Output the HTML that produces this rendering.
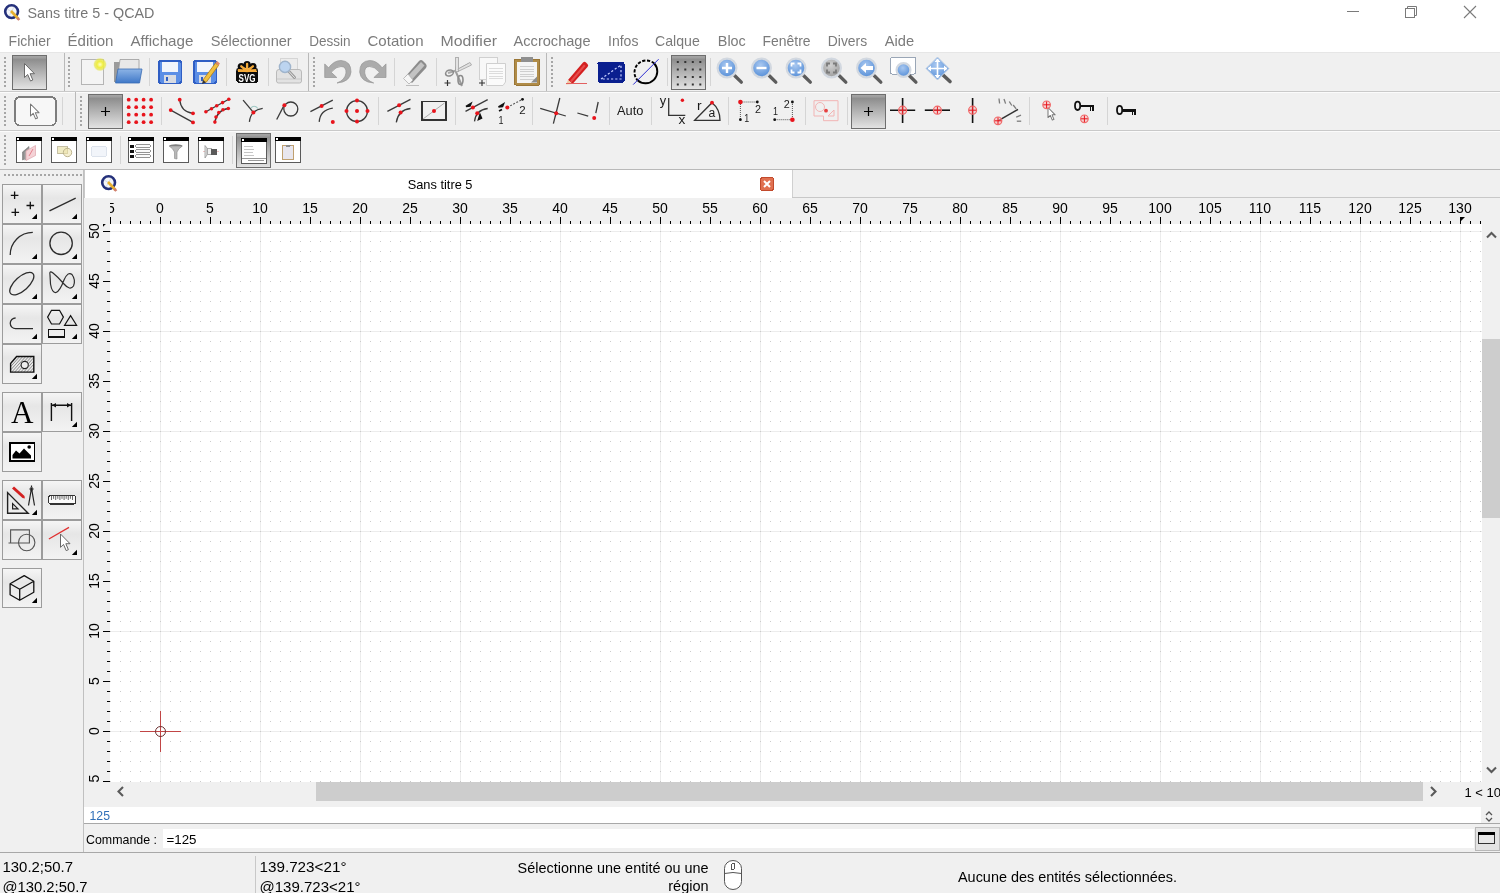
<!DOCTYPE html>
<html><head><meta charset="utf-8"><title>QCAD</title>
<style>html,body{margin:0;padding:0;overflow:hidden;background:#f0f0f0}
svg{display:block;will-change:transform} rect{shape-rendering:crispEdges} text{font-family:"Liberation Sans", sans-serif}</style></head>
<body><svg width="1500" height="893" viewBox="0 0 1500 893"><rect x="0" y="0" width="1500" height="893" fill="#f0f0f0"/><rect x="0" y="0" width="1500" height="52" fill="#ffffff"/><text x="27.5" y="18" font-size="15" fill="#767676" textLength="127" lengthAdjust="spacingAndGlyphs">Sans titre 5 - QCAD</text><rect x="1347" y="11" width="12" height="1" fill="#7a7a7a"/><rect x="1405.5" y="8.5" width="9" height="9" fill="none" stroke="#7a7a7a"/><path d="M1407.5 8.5 V6.5 H1416.5 V15.5 H1414.5" fill="none" stroke="#7a7a7a"/><path d="M1464 6 L1476 18 M1476 6 L1464 18" stroke="#7a7a7a" stroke-width="1.1"/><text x="8.6" y="46" font-size="15" fill="#7b7b7b" textLength="42" lengthAdjust="spacingAndGlyphs">Fichier</text><text x="67.5" y="46" font-size="15" fill="#7b7b7b" textLength="46" lengthAdjust="spacingAndGlyphs">Édition</text><text x="130.4" y="46" font-size="15" fill="#7b7b7b" textLength="63" lengthAdjust="spacingAndGlyphs">Affichage</text><text x="210.7" y="46" font-size="15" fill="#7b7b7b" textLength="81" lengthAdjust="spacingAndGlyphs">Sélectionner</text><text x="309.2" y="46" font-size="15" fill="#7b7b7b" textLength="41.4" lengthAdjust="spacingAndGlyphs">Dessin</text><text x="367.5" y="46" font-size="15" fill="#7b7b7b" textLength="56" lengthAdjust="spacingAndGlyphs">Cotation</text><text x="440.6" y="46" font-size="15" fill="#7b7b7b" textLength="56.4" lengthAdjust="spacingAndGlyphs">Modifier</text><text x="513.6" y="46" font-size="15" fill="#7b7b7b" textLength="77" lengthAdjust="spacingAndGlyphs">Accrochage</text><text x="608" y="46" font-size="15" fill="#7b7b7b" textLength="30.4" lengthAdjust="spacingAndGlyphs">Infos</text><text x="655" y="46" font-size="15" fill="#7b7b7b" textLength="44.8" lengthAdjust="spacingAndGlyphs">Calque</text><text x="717.8" y="46" font-size="15" fill="#7b7b7b" textLength="28" lengthAdjust="spacingAndGlyphs">Bloc</text><text x="762.6" y="46" font-size="15" fill="#7b7b7b" textLength="48" lengthAdjust="spacingAndGlyphs">Fenêtre</text><text x="827.8" y="46" font-size="15" fill="#7b7b7b" textLength="39.4" lengthAdjust="spacingAndGlyphs">Divers</text><text x="884.8" y="46" font-size="15" fill="#7b7b7b" textLength="29.4" lengthAdjust="spacingAndGlyphs">Aide</text><rect x="0" y="52" width="1500" height="1" fill="#e6e6e6"/><rect x="0" y="91" width="1500" height="1" fill="#c9c9c9"/><rect x="0" y="92" width="1500" height="1" fill="#fbfbfb"/><rect x="0" y="130" width="1500" height="1" fill="#c9c9c9"/><rect x="0" y="131" width="1500" height="1" fill="#fbfbfb"/><rect x="0" y="169" width="1500" height="1" fill="#b9b9b9"/><rect x="4" y="57" width="2" height="2" fill="#a6a6a6"/><rect x="4" y="61" width="2" height="2" fill="#a6a6a6"/><rect x="4" y="65" width="2" height="2" fill="#a6a6a6"/><rect x="4" y="69" width="2" height="2" fill="#a6a6a6"/><rect x="4" y="73" width="2" height="2" fill="#a6a6a6"/><rect x="4" y="77" width="2" height="2" fill="#a6a6a6"/><rect x="4" y="81" width="2" height="2" fill="#a6a6a6"/><rect x="4" y="85" width="2" height="2" fill="#a6a6a6"/><rect x="68" y="57" width="2" height="2" fill="#a6a6a6"/><rect x="68" y="61" width="2" height="2" fill="#a6a6a6"/><rect x="68" y="65" width="2" height="2" fill="#a6a6a6"/><rect x="68" y="69" width="2" height="2" fill="#a6a6a6"/><rect x="68" y="73" width="2" height="2" fill="#a6a6a6"/><rect x="68" y="77" width="2" height="2" fill="#a6a6a6"/><rect x="68" y="81" width="2" height="2" fill="#a6a6a6"/><rect x="68" y="85" width="2" height="2" fill="#a6a6a6"/><rect x="313" y="57" width="2" height="2" fill="#a6a6a6"/><rect x="313" y="61" width="2" height="2" fill="#a6a6a6"/><rect x="313" y="65" width="2" height="2" fill="#a6a6a6"/><rect x="313" y="69" width="2" height="2" fill="#a6a6a6"/><rect x="313" y="73" width="2" height="2" fill="#a6a6a6"/><rect x="313" y="77" width="2" height="2" fill="#a6a6a6"/><rect x="313" y="81" width="2" height="2" fill="#a6a6a6"/><rect x="313" y="85" width="2" height="2" fill="#a6a6a6"/><rect x="551" y="57" width="2" height="2" fill="#a6a6a6"/><rect x="551" y="61" width="2" height="2" fill="#a6a6a6"/><rect x="551" y="65" width="2" height="2" fill="#a6a6a6"/><rect x="551" y="69" width="2" height="2" fill="#a6a6a6"/><rect x="551" y="73" width="2" height="2" fill="#a6a6a6"/><rect x="551" y="77" width="2" height="2" fill="#a6a6a6"/><rect x="551" y="81" width="2" height="2" fill="#a6a6a6"/><rect x="551" y="85" width="2" height="2" fill="#a6a6a6"/><rect x="4" y="96" width="2" height="2" fill="#a6a6a6"/><rect x="4" y="100" width="2" height="2" fill="#a6a6a6"/><rect x="4" y="104" width="2" height="2" fill="#a6a6a6"/><rect x="4" y="108" width="2" height="2" fill="#a6a6a6"/><rect x="4" y="112" width="2" height="2" fill="#a6a6a6"/><rect x="4" y="116" width="2" height="2" fill="#a6a6a6"/><rect x="4" y="120" width="2" height="2" fill="#a6a6a6"/><rect x="4" y="124" width="2" height="2" fill="#a6a6a6"/><rect x="80" y="96" width="2" height="2" fill="#a6a6a6"/><rect x="80" y="100" width="2" height="2" fill="#a6a6a6"/><rect x="80" y="104" width="2" height="2" fill="#a6a6a6"/><rect x="80" y="108" width="2" height="2" fill="#a6a6a6"/><rect x="80" y="112" width="2" height="2" fill="#a6a6a6"/><rect x="80" y="116" width="2" height="2" fill="#a6a6a6"/><rect x="80" y="120" width="2" height="2" fill="#a6a6a6"/><rect x="80" y="124" width="2" height="2" fill="#a6a6a6"/><rect x="4" y="135" width="2" height="2" fill="#a6a6a6"/><rect x="4" y="139" width="2" height="2" fill="#a6a6a6"/><rect x="4" y="143" width="2" height="2" fill="#a6a6a6"/><rect x="4" y="147" width="2" height="2" fill="#a6a6a6"/><rect x="4" y="151" width="2" height="2" fill="#a6a6a6"/><rect x="4" y="155" width="2" height="2" fill="#a6a6a6"/><rect x="4" y="159" width="2" height="2" fill="#a6a6a6"/><rect x="4" y="163" width="2" height="2" fill="#a6a6a6"/><rect x="64" y="53" width="1" height="38" fill="#b9b9b9"/><rect x="308" y="53" width="1" height="38" fill="#b9b9b9"/><rect x="546" y="53" width="1" height="38" fill="#b9b9b9"/><rect x="75" y="92" width="1" height="38" fill="#b9b9b9"/><rect x="149" y="58" width="1" height="28" fill="#d5d5d5"/><rect x="226" y="58" width="1" height="28" fill="#d5d5d5"/><rect x="268" y="58" width="1" height="28" fill="#d5d5d5"/><rect x="394" y="58" width="1" height="28" fill="#d5d5d5"/><rect x="436" y="58" width="1" height="28" fill="#d5d5d5"/><rect x="667" y="58" width="1" height="28" fill="#d5d5d5"/><rect x="710" y="58" width="1" height="28" fill="#d5d5d5"/><rect x="62" y="97" width="1" height="28" fill="#d5d5d5"/><rect x="161" y="97" width="1" height="28" fill="#d5d5d5"/><rect x="378" y="97" width="1" height="28" fill="#d5d5d5"/><rect x="455" y="97" width="1" height="28" fill="#d5d5d5"/><rect x="532" y="97" width="1" height="28" fill="#d5d5d5"/><rect x="609" y="97" width="1" height="28" fill="#d5d5d5"/><rect x="651" y="97" width="1" height="28" fill="#d5d5d5"/><rect x="728" y="97" width="1" height="28" fill="#d5d5d5"/><rect x="805" y="97" width="1" height="28" fill="#d5d5d5"/><rect x="847" y="97" width="1" height="28" fill="#d5d5d5"/><rect x="1029" y="97" width="1" height="28" fill="#d5d5d5"/><rect x="1107" y="97" width="1" height="28" fill="#d5d5d5"/><rect x="120" y="136" width="1" height="28" fill="#d5d5d5"/><rect x="232" y="136" width="1" height="28" fill="#d5d5d5"/><rect x="83" y="170" width="1" height="682" fill="#c0c0c0"/><rect x="4" y="174" width="2" height="2" fill="#a6a6a6"/><rect x="8" y="174" width="2" height="2" fill="#a6a6a6"/><rect x="12" y="174" width="2" height="2" fill="#a6a6a6"/><rect x="16" y="174" width="2" height="2" fill="#a6a6a6"/><rect x="20" y="174" width="2" height="2" fill="#a6a6a6"/><rect x="24" y="174" width="2" height="2" fill="#a6a6a6"/><rect x="28" y="174" width="2" height="2" fill="#a6a6a6"/><rect x="32" y="174" width="2" height="2" fill="#a6a6a6"/><rect x="36" y="174" width="2" height="2" fill="#a6a6a6"/><rect x="40" y="174" width="2" height="2" fill="#a6a6a6"/><rect x="44" y="174" width="2" height="2" fill="#a6a6a6"/><rect x="48" y="174" width="2" height="2" fill="#a6a6a6"/><rect x="52" y="174" width="2" height="2" fill="#a6a6a6"/><rect x="56" y="174" width="2" height="2" fill="#a6a6a6"/><rect x="60" y="174" width="2" height="2" fill="#a6a6a6"/><rect x="64" y="174" width="2" height="2" fill="#a6a6a6"/><rect x="68" y="174" width="2" height="2" fill="#a6a6a6"/><rect x="72" y="174" width="2" height="2" fill="#a6a6a6"/><rect x="76" y="174" width="2" height="2" fill="#a6a6a6"/><rect x="80" y="174" width="2" height="2" fill="#a6a6a6"/><rect x="84" y="170" width="1416" height="28" fill="#f0f0f0"/><rect x="84" y="170" width="708" height="28" fill="#ffffff"/><rect x="84" y="170" width="1" height="28" fill="#c8c8c8"/><rect x="792" y="170" width="1" height="28" fill="#d0d0d0"/><rect x="792" y="197" width="708" height="1" fill="#c8c8c8"/><text x="407.7" y="189" font-size="13" fill="#000" textLength="64.8" lengthAdjust="spacingAndGlyphs">Sans titre 5</text><rect x="760.5" y="177.5" width="13" height="13" rx="2.5" fill="#e07050" stroke="#c24a2c"/><path d="M764 181 L770 187 M770 181 L764 187" stroke="#fff" stroke-width="2"/><g transform="translate(4,4)"><circle cx="7.6" cy="7.6" r="6.4" fill="#f4f6fa" stroke="#24307a" stroke-width="2.6"/><path d="M3 5 L12 10 M5 12 L10 3" stroke="#c0c8d8" stroke-width="0.6"/><path d="M7 7 L14.5 15" stroke="#e8b030" stroke-width="2.6"/><path d="M13.3 13.8 L15.3 16" stroke="#d08070" stroke-width="2.6"/></g><g transform="translate(101,175)"><circle cx="7.6" cy="7.6" r="6.4" fill="#f4f6fa" stroke="#24307a" stroke-width="2.6"/><path d="M3 5 L12 10 M5 12 L10 3" stroke="#c0c8d8" stroke-width="0.6"/><path d="M7 7 L14.5 15" stroke="#e8b030" stroke-width="2.6"/><path d="M13.3 13.8 L15.3 16" stroke="#d08070" stroke-width="2.6"/></g><rect x="84" y="198" width="1416" height="26" fill="#f0f0f0"/><rect x="84" y="224" width="26" height="558" fill="#f0f0f0"/><rect x="110" y="224" width="1372" height="558" fill="#ffffff"/><defs><pattern id="dots" x="0" y="1" width="10" height="10" patternUnits="userSpaceOnUse"><rect x="0" y="0" width="1" height="1" fill="#cbcbcb"/></pattern></defs><rect x="160" y="224" width="1" height="558" fill="#ececec"/><rect x="260" y="224" width="1" height="558" fill="#ececec"/><rect x="360" y="224" width="1" height="558" fill="#ececec"/><rect x="460" y="224" width="1" height="558" fill="#ececec"/><rect x="560" y="224" width="1" height="558" fill="#ececec"/><rect x="660" y="224" width="1" height="558" fill="#ececec"/><rect x="760" y="224" width="1" height="558" fill="#ececec"/><rect x="860" y="224" width="1" height="558" fill="#ececec"/><rect x="960" y="224" width="1" height="558" fill="#ececec"/><rect x="1060" y="224" width="1" height="558" fill="#ececec"/><rect x="1160" y="224" width="1" height="558" fill="#ececec"/><rect x="1260" y="224" width="1" height="558" fill="#ececec"/><rect x="1360" y="224" width="1" height="558" fill="#ececec"/><rect x="1460" y="224" width="1" height="558" fill="#ececec"/><rect x="110" y="231" width="1372" height="1" fill="#ececec"/><rect x="110" y="331" width="1372" height="1" fill="#ececec"/><rect x="110" y="431" width="1372" height="1" fill="#ececec"/><rect x="110" y="531" width="1372" height="1" fill="#ececec"/><rect x="110" y="631" width="1372" height="1" fill="#ececec"/><rect x="110" y="731" width="1372" height="1" fill="#ececec"/><rect x="110" y="224" width="1372" height="558" fill="url(#dots)"/><rect x="110" y="217" width="1" height="7" fill="#000"/><rect x="120" y="221" width="1" height="3" fill="#000"/><rect x="130" y="221" width="1" height="3" fill="#000"/><rect x="140" y="221" width="1" height="3" fill="#000"/><rect x="150" y="221" width="1" height="3" fill="#000"/><rect x="160" y="217" width="1" height="7" fill="#000"/><rect x="170" y="221" width="1" height="3" fill="#000"/><rect x="180" y="221" width="1" height="3" fill="#000"/><rect x="190" y="221" width="1" height="3" fill="#000"/><rect x="200" y="221" width="1" height="3" fill="#000"/><rect x="210" y="217" width="1" height="7" fill="#000"/><rect x="220" y="221" width="1" height="3" fill="#000"/><rect x="230" y="221" width="1" height="3" fill="#000"/><rect x="240" y="221" width="1" height="3" fill="#000"/><rect x="250" y="221" width="1" height="3" fill="#000"/><rect x="260" y="217" width="1" height="7" fill="#000"/><rect x="270" y="221" width="1" height="3" fill="#000"/><rect x="280" y="221" width="1" height="3" fill="#000"/><rect x="290" y="221" width="1" height="3" fill="#000"/><rect x="300" y="221" width="1" height="3" fill="#000"/><rect x="310" y="217" width="1" height="7" fill="#000"/><rect x="320" y="221" width="1" height="3" fill="#000"/><rect x="330" y="221" width="1" height="3" fill="#000"/><rect x="340" y="221" width="1" height="3" fill="#000"/><rect x="350" y="221" width="1" height="3" fill="#000"/><rect x="360" y="217" width="1" height="7" fill="#000"/><rect x="370" y="221" width="1" height="3" fill="#000"/><rect x="380" y="221" width="1" height="3" fill="#000"/><rect x="390" y="221" width="1" height="3" fill="#000"/><rect x="400" y="221" width="1" height="3" fill="#000"/><rect x="410" y="217" width="1" height="7" fill="#000"/><rect x="420" y="221" width="1" height="3" fill="#000"/><rect x="430" y="221" width="1" height="3" fill="#000"/><rect x="440" y="221" width="1" height="3" fill="#000"/><rect x="450" y="221" width="1" height="3" fill="#000"/><rect x="460" y="217" width="1" height="7" fill="#000"/><rect x="470" y="221" width="1" height="3" fill="#000"/><rect x="480" y="221" width="1" height="3" fill="#000"/><rect x="490" y="221" width="1" height="3" fill="#000"/><rect x="500" y="221" width="1" height="3" fill="#000"/><rect x="510" y="217" width="1" height="7" fill="#000"/><rect x="520" y="221" width="1" height="3" fill="#000"/><rect x="530" y="221" width="1" height="3" fill="#000"/><rect x="540" y="221" width="1" height="3" fill="#000"/><rect x="550" y="221" width="1" height="3" fill="#000"/><rect x="560" y="217" width="1" height="7" fill="#000"/><rect x="570" y="221" width="1" height="3" fill="#000"/><rect x="580" y="221" width="1" height="3" fill="#000"/><rect x="590" y="221" width="1" height="3" fill="#000"/><rect x="600" y="221" width="1" height="3" fill="#000"/><rect x="610" y="217" width="1" height="7" fill="#000"/><rect x="620" y="221" width="1" height="3" fill="#000"/><rect x="630" y="221" width="1" height="3" fill="#000"/><rect x="640" y="221" width="1" height="3" fill="#000"/><rect x="650" y="221" width="1" height="3" fill="#000"/><rect x="660" y="217" width="1" height="7" fill="#000"/><rect x="670" y="221" width="1" height="3" fill="#000"/><rect x="680" y="221" width="1" height="3" fill="#000"/><rect x="690" y="221" width="1" height="3" fill="#000"/><rect x="700" y="221" width="1" height="3" fill="#000"/><rect x="710" y="217" width="1" height="7" fill="#000"/><rect x="720" y="221" width="1" height="3" fill="#000"/><rect x="730" y="221" width="1" height="3" fill="#000"/><rect x="740" y="221" width="1" height="3" fill="#000"/><rect x="750" y="221" width="1" height="3" fill="#000"/><rect x="760" y="217" width="1" height="7" fill="#000"/><rect x="770" y="221" width="1" height="3" fill="#000"/><rect x="780" y="221" width="1" height="3" fill="#000"/><rect x="790" y="221" width="1" height="3" fill="#000"/><rect x="800" y="221" width="1" height="3" fill="#000"/><rect x="810" y="217" width="1" height="7" fill="#000"/><rect x="820" y="221" width="1" height="3" fill="#000"/><rect x="830" y="221" width="1" height="3" fill="#000"/><rect x="840" y="221" width="1" height="3" fill="#000"/><rect x="850" y="221" width="1" height="3" fill="#000"/><rect x="860" y="217" width="1" height="7" fill="#000"/><rect x="870" y="221" width="1" height="3" fill="#000"/><rect x="880" y="221" width="1" height="3" fill="#000"/><rect x="890" y="221" width="1" height="3" fill="#000"/><rect x="900" y="221" width="1" height="3" fill="#000"/><rect x="910" y="217" width="1" height="7" fill="#000"/><rect x="920" y="221" width="1" height="3" fill="#000"/><rect x="930" y="221" width="1" height="3" fill="#000"/><rect x="940" y="221" width="1" height="3" fill="#000"/><rect x="950" y="221" width="1" height="3" fill="#000"/><rect x="960" y="217" width="1" height="7" fill="#000"/><rect x="970" y="221" width="1" height="3" fill="#000"/><rect x="980" y="221" width="1" height="3" fill="#000"/><rect x="990" y="221" width="1" height="3" fill="#000"/><rect x="1000" y="221" width="1" height="3" fill="#000"/><rect x="1010" y="217" width="1" height="7" fill="#000"/><rect x="1020" y="221" width="1" height="3" fill="#000"/><rect x="1030" y="221" width="1" height="3" fill="#000"/><rect x="1040" y="221" width="1" height="3" fill="#000"/><rect x="1050" y="221" width="1" height="3" fill="#000"/><rect x="1060" y="217" width="1" height="7" fill="#000"/><rect x="1070" y="221" width="1" height="3" fill="#000"/><rect x="1080" y="221" width="1" height="3" fill="#000"/><rect x="1090" y="221" width="1" height="3" fill="#000"/><rect x="1100" y="221" width="1" height="3" fill="#000"/><rect x="1110" y="217" width="1" height="7" fill="#000"/><rect x="1120" y="221" width="1" height="3" fill="#000"/><rect x="1130" y="221" width="1" height="3" fill="#000"/><rect x="1140" y="221" width="1" height="3" fill="#000"/><rect x="1150" y="221" width="1" height="3" fill="#000"/><rect x="1160" y="217" width="1" height="7" fill="#000"/><rect x="1170" y="221" width="1" height="3" fill="#000"/><rect x="1180" y="221" width="1" height="3" fill="#000"/><rect x="1190" y="221" width="1" height="3" fill="#000"/><rect x="1200" y="221" width="1" height="3" fill="#000"/><rect x="1210" y="217" width="1" height="7" fill="#000"/><rect x="1220" y="221" width="1" height="3" fill="#000"/><rect x="1230" y="221" width="1" height="3" fill="#000"/><rect x="1240" y="221" width="1" height="3" fill="#000"/><rect x="1250" y="221" width="1" height="3" fill="#000"/><rect x="1260" y="217" width="1" height="7" fill="#000"/><rect x="1270" y="221" width="1" height="3" fill="#000"/><rect x="1280" y="221" width="1" height="3" fill="#000"/><rect x="1290" y="221" width="1" height="3" fill="#000"/><rect x="1300" y="221" width="1" height="3" fill="#000"/><rect x="1310" y="217" width="1" height="7" fill="#000"/><rect x="1320" y="221" width="1" height="3" fill="#000"/><rect x="1330" y="221" width="1" height="3" fill="#000"/><rect x="1340" y="221" width="1" height="3" fill="#000"/><rect x="1350" y="221" width="1" height="3" fill="#000"/><rect x="1360" y="217" width="1" height="7" fill="#000"/><rect x="1370" y="221" width="1" height="3" fill="#000"/><rect x="1380" y="221" width="1" height="3" fill="#000"/><rect x="1390" y="221" width="1" height="3" fill="#000"/><rect x="1400" y="221" width="1" height="3" fill="#000"/><rect x="1410" y="217" width="1" height="7" fill="#000"/><rect x="1420" y="221" width="1" height="3" fill="#000"/><rect x="1430" y="221" width="1" height="3" fill="#000"/><rect x="1440" y="221" width="1" height="3" fill="#000"/><rect x="1450" y="221" width="1" height="3" fill="#000"/><rect x="1460" y="217" width="1" height="7" fill="#000"/><rect x="1470" y="221" width="1" height="3" fill="#000"/><rect x="1480" y="221" width="1" height="3" fill="#000"/><svg x="110" y="198" width="1372" height="26" overflow="hidden"><g transform="translate(-110,-198)"><text x="108.5" y="212.5" font-size="14" fill="#000" text-anchor="middle">-5</text><text x="160" y="212.5" font-size="14" fill="#000" text-anchor="middle">0</text><text x="210" y="212.5" font-size="14" fill="#000" text-anchor="middle">5</text><text x="260" y="212.5" font-size="14" fill="#000" text-anchor="middle">10</text><text x="310" y="212.5" font-size="14" fill="#000" text-anchor="middle">15</text><text x="360" y="212.5" font-size="14" fill="#000" text-anchor="middle">20</text><text x="410" y="212.5" font-size="14" fill="#000" text-anchor="middle">25</text><text x="460" y="212.5" font-size="14" fill="#000" text-anchor="middle">30</text><text x="510" y="212.5" font-size="14" fill="#000" text-anchor="middle">35</text><text x="560" y="212.5" font-size="14" fill="#000" text-anchor="middle">40</text><text x="610" y="212.5" font-size="14" fill="#000" text-anchor="middle">45</text><text x="660" y="212.5" font-size="14" fill="#000" text-anchor="middle">50</text><text x="710" y="212.5" font-size="14" fill="#000" text-anchor="middle">55</text><text x="760" y="212.5" font-size="14" fill="#000" text-anchor="middle">60</text><text x="810" y="212.5" font-size="14" fill="#000" text-anchor="middle">65</text><text x="860" y="212.5" font-size="14" fill="#000" text-anchor="middle">70</text><text x="910" y="212.5" font-size="14" fill="#000" text-anchor="middle">75</text><text x="960" y="212.5" font-size="14" fill="#000" text-anchor="middle">80</text><text x="1010" y="212.5" font-size="14" fill="#000" text-anchor="middle">85</text><text x="1060" y="212.5" font-size="14" fill="#000" text-anchor="middle">90</text><text x="1110" y="212.5" font-size="14" fill="#000" text-anchor="middle">95</text><text x="1160" y="212.5" font-size="14" fill="#000" text-anchor="middle">100</text><text x="1210" y="212.5" font-size="14" fill="#000" text-anchor="middle">105</text><text x="1260" y="212.5" font-size="14" fill="#000" text-anchor="middle">110</text><text x="1310" y="212.5" font-size="14" fill="#000" text-anchor="middle">115</text><text x="1360" y="212.5" font-size="14" fill="#000" text-anchor="middle">120</text><text x="1410" y="212.5" font-size="14" fill="#000" text-anchor="middle">125</text><text x="1460" y="212.5" font-size="14" fill="#000" text-anchor="middle">130</text></g></svg><rect x="103" y="781" width="7" height="1" fill="#000"/><rect x="107" y="771" width="3" height="1" fill="#000"/><rect x="107" y="761" width="3" height="1" fill="#000"/><rect x="107" y="751" width="3" height="1" fill="#000"/><rect x="107" y="741" width="3" height="1" fill="#000"/><rect x="103" y="731" width="7" height="1" fill="#000"/><rect x="107" y="721" width="3" height="1" fill="#000"/><rect x="107" y="711" width="3" height="1" fill="#000"/><rect x="107" y="701" width="3" height="1" fill="#000"/><rect x="107" y="691" width="3" height="1" fill="#000"/><rect x="103" y="681" width="7" height="1" fill="#000"/><rect x="107" y="671" width="3" height="1" fill="#000"/><rect x="107" y="661" width="3" height="1" fill="#000"/><rect x="107" y="651" width="3" height="1" fill="#000"/><rect x="107" y="641" width="3" height="1" fill="#000"/><rect x="103" y="631" width="7" height="1" fill="#000"/><rect x="107" y="621" width="3" height="1" fill="#000"/><rect x="107" y="611" width="3" height="1" fill="#000"/><rect x="107" y="601" width="3" height="1" fill="#000"/><rect x="107" y="591" width="3" height="1" fill="#000"/><rect x="103" y="581" width="7" height="1" fill="#000"/><rect x="107" y="571" width="3" height="1" fill="#000"/><rect x="107" y="561" width="3" height="1" fill="#000"/><rect x="107" y="551" width="3" height="1" fill="#000"/><rect x="107" y="541" width="3" height="1" fill="#000"/><rect x="103" y="531" width="7" height="1" fill="#000"/><rect x="107" y="521" width="3" height="1" fill="#000"/><rect x="107" y="511" width="3" height="1" fill="#000"/><rect x="107" y="501" width="3" height="1" fill="#000"/><rect x="107" y="491" width="3" height="1" fill="#000"/><rect x="103" y="481" width="7" height="1" fill="#000"/><rect x="107" y="471" width="3" height="1" fill="#000"/><rect x="107" y="461" width="3" height="1" fill="#000"/><rect x="107" y="451" width="3" height="1" fill="#000"/><rect x="107" y="441" width="3" height="1" fill="#000"/><rect x="103" y="431" width="7" height="1" fill="#000"/><rect x="107" y="421" width="3" height="1" fill="#000"/><rect x="107" y="411" width="3" height="1" fill="#000"/><rect x="107" y="401" width="3" height="1" fill="#000"/><rect x="107" y="391" width="3" height="1" fill="#000"/><rect x="103" y="381" width="7" height="1" fill="#000"/><rect x="107" y="371" width="3" height="1" fill="#000"/><rect x="107" y="361" width="3" height="1" fill="#000"/><rect x="107" y="351" width="3" height="1" fill="#000"/><rect x="107" y="341" width="3" height="1" fill="#000"/><rect x="103" y="331" width="7" height="1" fill="#000"/><rect x="107" y="321" width="3" height="1" fill="#000"/><rect x="107" y="311" width="3" height="1" fill="#000"/><rect x="107" y="301" width="3" height="1" fill="#000"/><rect x="107" y="291" width="3" height="1" fill="#000"/><rect x="103" y="281" width="7" height="1" fill="#000"/><rect x="107" y="271" width="3" height="1" fill="#000"/><rect x="107" y="261" width="3" height="1" fill="#000"/><rect x="107" y="251" width="3" height="1" fill="#000"/><rect x="107" y="241" width="3" height="1" fill="#000"/><rect x="103" y="231" width="7" height="1" fill="#000"/><svg x="84" y="224" width="26" height="558" overflow="hidden"><g transform="translate(-84,-224)"><text x="0" y="0" font-size="14" text-anchor="middle" transform="translate(99,781) rotate(-90)">-5</text><text x="0" y="0" font-size="14" text-anchor="middle" transform="translate(99,731) rotate(-90)">0</text><text x="0" y="0" font-size="14" text-anchor="middle" transform="translate(99,681) rotate(-90)">5</text><text x="0" y="0" font-size="14" text-anchor="middle" transform="translate(99,631) rotate(-90)">10</text><text x="0" y="0" font-size="14" text-anchor="middle" transform="translate(99,581) rotate(-90)">15</text><text x="0" y="0" font-size="14" text-anchor="middle" transform="translate(99,531) rotate(-90)">20</text><text x="0" y="0" font-size="14" text-anchor="middle" transform="translate(99,481) rotate(-90)">25</text><text x="0" y="0" font-size="14" text-anchor="middle" transform="translate(99,431) rotate(-90)">30</text><text x="0" y="0" font-size="14" text-anchor="middle" transform="translate(99,381) rotate(-90)">35</text><text x="0" y="0" font-size="14" text-anchor="middle" transform="translate(99,331) rotate(-90)">40</text><text x="0" y="0" font-size="14" text-anchor="middle" transform="translate(99,281) rotate(-90)">45</text><text x="0" y="0" font-size="14" text-anchor="middle" transform="translate(99,231) rotate(-90)">50</text></g></svg><path d="M1460 217 H1465 L1461 221 V224 H1460 Z" fill="#000"/><path d="M103 224 H105.8 L103 226.8 Z" fill="#000"/><rect x="140" y="731" width="41" height="1" fill="#c14545"/><rect x="160" y="711" width="1" height="41" fill="#c14545"/><circle cx="160.5" cy="731.5" r="5" fill="none" stroke="#6b3030" stroke-width="1"/><rect x="1482" y="198" width="18" height="584" fill="#f0f0f0"/><rect x="1482" y="339" width="18" height="179" fill="#cdcdcd"/><path d="M1487 237.5 L1491.5 233 L1496 237.5" fill="none" stroke="#5a5a5a" stroke-width="2.1"/><path d="M1487 767.5 L1491.5 772 L1496 767.5" fill="none" stroke="#5a5a5a" stroke-width="2.1"/><rect x="84" y="782" width="1416" height="25" fill="#f0f0f0"/><rect x="316" y="782" width="1107" height="19" fill="#cdcdcd"/><path d="M123 787 L118.5 791.5 L123 796" fill="none" stroke="#5a5a5a" stroke-width="2.1"/><path d="M1431 787 L1435.5 791.5 L1431 796" fill="none" stroke="#5a5a5a" stroke-width="2.1"/><text x="1464.5" y="796.5" font-size="13" fill="#000">1 &lt; 10</text><rect x="84" y="807" width="1397" height="16" fill="#ffffff"/><text x="89.5" y="820" font-size="13" fill="#2f6fb8" textLength="20.5" lengthAdjust="spacingAndGlyphs">125</text><path d="M1486 815 L1489 812 L1492 815 M1486 818 L1489 821 L1492 818" fill="none" stroke="#555" stroke-width="1.3"/><rect x="84" y="823" width="1416" height="1" fill="#a8a8a8"/><text x="86" y="844" font-size="13" fill="#000" textLength="71" lengthAdjust="spacingAndGlyphs">Commande :</text><rect x="163" y="829" width="1311" height="19" fill="#ffffff"/><text x="166.5" y="844" font-size="13" fill="#000" textLength="30" lengthAdjust="spacingAndGlyphs">=125</text><rect x="1475.5" y="827.5" width="24" height="23" fill="#e3e3e3" stroke="#b8b8b8"/><rect x="1478.5" y="832.5" width="16" height="11" fill="#e8e8e8" stroke="#333"/><rect x="1478" y="832" width="17" height="3" fill="#000"/><rect x="0" y="852" width="1500" height="1" fill="#a8a8a8"/><text x="2.5" y="872" font-size="14.5" fill="#000" textLength="70.5" lengthAdjust="spacingAndGlyphs">130.2;50.7</text><text x="2.5" y="891.5" font-size="14.5" fill="#000" textLength="85" lengthAdjust="spacingAndGlyphs">@130.2;50.7</text><rect x="255" y="856" width="1" height="37" fill="#c8c8c8"/><text x="259.5" y="872" font-size="14.5" fill="#000" textLength="87" lengthAdjust="spacingAndGlyphs">139.723&lt;21°</text><text x="259.5" y="891.5" font-size="14.5" fill="#000" textLength="101" lengthAdjust="spacingAndGlyphs">@139.723&lt;21°</text><text x="708.6" y="873" font-size="14.5" fill="#000" textLength="191" lengthAdjust="spacingAndGlyphs" text-anchor="end">Sélectionne une entité ou une</text><text x="708.6" y="891" font-size="14.5" fill="#000" text-anchor="end">région</text><path d="M724.5 872 V868.5 A8.5 8 0 0 1 741.5 868.5 V881.5 A8.5 8 0 0 1 724.5 881.5 Z" fill="#fff" stroke="#555"/><path d="M724.5 873.5 Q733 871.5 741.5 873.5" fill="none" stroke="#555"/><rect x="731.5" y="863.5" width="3" height="6" rx="1.5" fill="none" stroke="#555"/><text x="958" y="881.8" font-size="15.5" fill="#000" textLength="219" lengthAdjust="spacingAndGlyphs">Aucune des entités sélectionnées.</text><defs><linearGradient id="gpress" x1="0" y1="0" x2="0" y2="1"><stop offset="0" stop-color="#a6a6a6"/><stop offset="0.05" stop-color="#a2a2a2"/><stop offset="0.12" stop-color="#8e8e8e"/><stop offset="0.3" stop-color="#a0a0a0"/><stop offset="1" stop-color="#e4e4e4"/></linearGradient><linearGradient id="gbtn" x1="0" y1="0" x2="0" y2="1"><stop offset="0" stop-color="#f6f6f6"/><stop offset="0.35" stop-color="#e6e6e6"/><stop offset="1" stop-color="#f3f3f3"/></linearGradient><radialGradient id="glens" cx="0.45" cy="0.35" r="0.7"><stop offset="0" stop-color="#a9c8f0"/><stop offset="1" stop-color="#4f8ad6"/></radialGradient><radialGradient id="glensg" cx="0.45" cy="0.35" r="0.7"><stop offset="0" stop-color="#d0d0d0"/><stop offset="1" stop-color="#9a9a9a"/></radialGradient><linearGradient id="gfold" x1="0" y1="0" x2="0" y2="1"><stop offset="0" stop-color="#8db4e6"/><stop offset="1" stop-color="#3f78c8"/></linearGradient></defs><rect x="12.5" y="55.5" width="34" height="34" fill="url(#gpress)" stroke="#6e6e6e" style="shape-rendering:crispEdges"/><path transform="translate(24.5,63.5) scale(1.0)" d="M0 0 L0 14 L3.2 11 L6 17.5 L8.3 16.5 L5.6 10.2 L10 10.2 Z" fill="#ffffff" stroke="#6a6a6a" stroke-width="1.00" stroke-linejoin="round"/><rect x="81.5" y="59.5" width="22" height="25" fill="#f4f4f4" stroke="#b5b5b5"/><defs><radialGradient id="gglow"><stop offset="0" stop-color="#ffffc0"/><stop offset="0.45" stop-color="#f0ee40"/><stop offset="0.8" stop-color="#e6e650" stop-opacity="0.7"/><stop offset="1" stop-color="#f0f0a0" stop-opacity="0"/></radialGradient></defs><circle cx="100" cy="64.5" r="7" fill="url(#gglow)"/><path d="M114 62 H120 L122 64 H130 V82 H114 Z" fill="#9b9b9b"/><path d="M120 59.5 H139 V74 H118 Z" fill="#e8e8e8" stroke="#9a9a9a" stroke-width="0.8"/><path d="M115.5 83 L118 69 H142 L139.5 83 Z" fill="url(#gfold)" stroke="#3a6cb4" stroke-width="0.8"/><rect x="158.75" y="60.75" width="22.5" height="22.5" rx="2" fill="#5b8ee6" stroke="#2f5ec4" stroke-width="1.5"/><rect x="162" y="62" width="16" height="10" fill="#f2f5fb"/><rect x="164" y="75" width="12" height="8" fill="#d8dbe2"/><rect x="166" y="77" width="2" height="4" fill="#2f5ec4"/><rect x="193.75" y="60.75" width="22.5" height="22.5" rx="2" fill="#5b8ee6" stroke="#2f5ec4" stroke-width="1.5"/><rect x="197" y="62" width="16" height="10" fill="#f2f5fb"/><rect x="199" y="75" width="12" height="8" fill="#d8dbe2"/><rect x="201" y="77" width="2" height="4" fill="#2f5ec4"/><path d="M203 80 L215.5 63 L218.5 65.5 L206 82.5 Z" fill="#f0c040" stroke="#b07a10" stroke-width="0.8"/><path d="M215.5 63 L217 61 L220 63.5 L218.5 65.5 Z" fill="#e08a6a"/><path d="M203 80 L202 84 L206 82.5 Z" fill="#333"/><rect x="236.3" y="69.3" width="21.6" height="13.6" rx="3" fill="#0c0c0c"/><circle cx="241.3" cy="66.6" r="3.6" fill="#0c0c0c"/><circle cx="247.1" cy="64.6" r="3.6" fill="#0c0c0c"/><circle cx="252.9" cy="66.6" r="3.6" fill="#0c0c0c"/><circle cx="238.6" cy="70.5" r="2.4" fill="#0c0c0c"/><circle cx="255.6" cy="70.5" r="2.4" fill="#0c0c0c"/><path d="M247.1 71 L241.3 66.3 M247.1 71 L247.1 63.8 M247.1 71 L252.9 66.3 M247.1 71 L238.8 70.2 M247.1 71 L255.4 70.2" stroke="#f4aa3a" stroke-width="2.3" stroke-linecap="round"/><rect x="237.5" y="70.6" width="19.2" height="1.3" fill="#f4aa3a"/><text x="247.1" y="81.8" font-size="10.5" font-weight="bold" fill="#fff" text-anchor="middle" textLength="17" lengthAdjust="spacingAndGlyphs">SVG</text><rect x="280.5" y="58" width="17" height="13" rx="1.5" fill="#ececec" stroke="#d0d0d0" stroke-width="0.8"/><path d="M276.5 72 Q276.5 69.5 279 69.5 H299 Q301.5 69.5 301.5 72 V81 Q301.5 83 299.5 83 H278.5 Q276.5 83 276.5 81 Z" fill="#e2e2e2" stroke="#b4b4b4" stroke-width="0.9"/><path d="M277 79 H301" stroke="#c8c8c8" stroke-width="1"/><path d="M289 71.5 L294.5 77.5" stroke="#9a9a9a" stroke-width="3" stroke-linecap="round"/><path d="M289 71.5 L294.5 77.5" stroke="#e8e8e8" stroke-width="1" stroke-linecap="round"/><circle cx="285" cy="66.9" r="5.6" fill="#bcd4f0" stroke="#9fb4cc" stroke-width="1.4"/><path d="M324.7 63.9 L328.6 67.8 Q334 60.5 341 60.5 Q351 61 351 72 Q350 82 337 83 Q345 80 346 73 Q346.5 66.5 341 66.5 Q336 66.5 331.2 72.3 L336.8 77.5 L324.7 77.5 Z" fill="#ababab" stroke="#959595" stroke-width="0.7" stroke-linejoin="round"/><path transform="translate(710.7,0) scale(-1,1)" d="M324.7 63.9 L328.6 67.8 Q334 60.5 341 60.5 Q351 61 351 72 Q350 82 337 83 Q345 80 346 73 Q346.5 66.5 341 66.5 Q336 66.5 331.2 72.3 L336.8 77.5 L324.7 77.5 Z" fill="#ababab" stroke="#959595" stroke-width="0.7" stroke-linejoin="round"/><path d="M405 77 L419 61 Q421 59 423 61 L426 64 Q427.5 66 426 68 L412 83 Z" fill="#8c8c8c"/><path d="M408 76 L421 62 L424.5 65.5 L411.5 80 Z" fill="#e8e8e8" opacity="0.6"/><path d="M403.5 78.5 L408 74 L413 80 L409 84 Z" fill="#f6f6f6" stroke="#b0b0b0" stroke-width="0.8"/><rect x="406" y="85" width="13" height="1" fill="#bdbdbd"/><path d="M458 58 L456 72 L462 86" fill="none" stroke="#9c9c9c" stroke-width="2"/><path d="M469 64 L458 70 L448 73" fill="none" stroke="#a8a8a8" stroke-width="2"/><rect x="455.5" y="57.5" width="3" height="14" fill="#e2e2e2" stroke="#a0a0a0" stroke-width="0.8"/><path d="M458 69 L470 62.5 L471.5 65 L459 71 Z" fill="#e2e2e2" stroke="#a0a0a0" stroke-width="0.8"/><ellipse cx="449.5" cy="73" rx="4" ry="2.8" fill="none" stroke="#8c8c8c" stroke-width="1.6" transform="rotate(-20 449.5 73)"/><ellipse cx="460.5" cy="80" rx="2.5" ry="4.5" fill="none" stroke="#8c8c8c" stroke-width="1.6"/><path d="M447.5 80 V86 M444.5 83 H450.5" stroke="#333" stroke-width="1.2"/><rect x="479" y="57.5" width="18" height="22" fill="#f8f8f8" stroke="#d0d0d0"/><path d="M486.5 63.5 H505.5 V82 L503 85.5 H486.5 Z" fill="#fbfbfb" stroke="#cfcfcf"/><rect x="489" y="68" width="14" height="1" fill="#dcdcdc"/><rect x="489" y="70.5" width="14" height="1" fill="#dcdcdc"/><rect x="489" y="73" width="14" height="1" fill="#dcdcdc"/><rect x="489" y="75.5" width="14" height="1" fill="#dcdcdc"/><rect x="489" y="78" width="14" height="1" fill="#dcdcdc"/><path d="M482 80 V86 M479 83 H485" stroke="#333" stroke-width="1.1"/><rect x="514.5" y="59.5" width="25" height="25.5" rx="1" fill="#b08c48" stroke="#9a7636"/><rect x="517" y="62" width="20" height="20.5" fill="#f4f4f4"/><rect x="521" y="57" width="12" height="5" rx="1.5" fill="#8f8f8f"/><rect x="520" y="66" width="14" height="1" fill="#cfcfcf"/><rect x="520" y="68.5" width="14" height="1" fill="#cfcfcf"/><rect x="520" y="71" width="14" height="1" fill="#cfcfcf"/><rect x="520" y="73.5" width="14" height="1" fill="#cfcfcf"/><rect x="520" y="76" width="14" height="1" fill="#cfcfcf"/><rect x="520" y="78.5" width="14" height="1" fill="#cfcfcf"/><path d="M531 82.5 L537 76.5 V82.5 Z" fill="#8d8d8d"/><path d="M568 80 L583 62.5 Q584.5 61 586 62.5 L587.5 64 Q589 65.5 587.5 67 L572.5 84 Z" fill="#d42020"/><path d="M570 81 L584 64.5 L585.5 66 L571.5 82.5 Z" fill="#ee6060" opacity="0.7"/><path d="M568 80 L566 84.5 L572.5 84 Z" fill="#f0c8a0"/><rect x="566" y="83" width="21" height="1" fill="#e26060"/><rect x="597.5" y="62" width="27" height="20.5" rx="1.5" fill="#0a1f8f"/><path d="M601 79 L621 65 V79 Z" fill="none" stroke="#c8d0ff" stroke-width="1.2" stroke-dasharray="2.2 2"/><path d="M637.5 80.3 A11.9 11.9 0 0 0 654.3 63.5" fill="none" stroke="#000" stroke-width="1.9"/><path d="M654.3 63.5 A11.9 11.9 0 0 0 637.5 80.3" fill="none" stroke="#000" stroke-width="1.9" stroke-dasharray="3.2 1.6"/><path d="M633.2 84.6 L658.6 59.2" stroke="#2a2ad0" stroke-width="1"/><rect x="671.5" y="55.5" width="34" height="34" fill="url(#gpress)" stroke="#6e6e6e" style="shape-rendering:crispEdges"/><rect x="676.8" y="61.0" width="2" height="2" fill="#333" style="shape-rendering:auto"/><rect x="684.3" y="61.0" width="2" height="2" fill="#333" style="shape-rendering:auto"/><rect x="691.8" y="61.0" width="2" height="2" fill="#333" style="shape-rendering:auto"/><rect x="699.3" y="61.0" width="2" height="2" fill="#333" style="shape-rendering:auto"/><rect x="676.8" y="68.5" width="2" height="2" fill="#333" style="shape-rendering:auto"/><rect x="684.3" y="68.5" width="2" height="2" fill="#333" style="shape-rendering:auto"/><rect x="691.8" y="68.5" width="2" height="2" fill="#333" style="shape-rendering:auto"/><rect x="699.3" y="68.5" width="2" height="2" fill="#333" style="shape-rendering:auto"/><rect x="676.8" y="76.0" width="2" height="2" fill="#333" style="shape-rendering:auto"/><rect x="684.3" y="76.0" width="2" height="2" fill="#333" style="shape-rendering:auto"/><rect x="691.8" y="76.0" width="2" height="2" fill="#333" style="shape-rendering:auto"/><rect x="699.3" y="76.0" width="2" height="2" fill="#333" style="shape-rendering:auto"/><rect x="676.8" y="83.5" width="2" height="2" fill="#333" style="shape-rendering:auto"/><rect x="684.3" y="83.5" width="2" height="2" fill="#333" style="shape-rendering:auto"/><rect x="691.8" y="83.5" width="2" height="2" fill="#333" style="shape-rendering:auto"/><rect x="699.3" y="83.5" width="2" height="2" fill="#333" style="shape-rendering:auto"/><path d="M734.8 75.8 L741.3 82.1" stroke="#5c5c5c" stroke-width="3.4" stroke-linecap="round"/><circle cx="727" cy="68" r="9.4" fill="url(#glens)" stroke="#d2d8e0" stroke-width="2.2"/><path d="M727 63 V73 M722 68 H732" stroke="#fff" stroke-width="2.4"/><path d="M769.3 75.8 L775.8 82.1" stroke="#5c5c5c" stroke-width="3.4" stroke-linecap="round"/><circle cx="761.5" cy="68" r="9.4" fill="url(#glens)" stroke="#d2d8e0" stroke-width="2.2"/><path d="M756.5 68 H766.5" stroke="#fff" stroke-width="2.4"/><path d="M803.8 75.8 L810.3 82.1" stroke="#5c5c5c" stroke-width="3.4" stroke-linecap="round"/><circle cx="796" cy="68" r="9.4" fill="url(#glens)" stroke="#d2d8e0" stroke-width="2.2"/><path d="M791.5 66.5 V63.5 H794.5 M797.5 63.5 H800.5 V66.5 M800.5 69.5 V72.5 H797.5 M794.5 72.5 H791.5 V69.5" fill="none" stroke="#fff" stroke-width="1.8"/><path d="M839.3 75.8 L845.8 82.1" stroke="#5c5c5c" stroke-width="3.4" stroke-linecap="round"/><circle cx="831.5" cy="68" r="9.4" fill="url(#glensg)" stroke="#d2d8e0" stroke-width="2.2"/><path d="M827 66.5 V63.5 H830 M833 63.5 H836 V66.5 M836 69.5 V72.5 H833 M830 72.5 H827 V69.5" fill="none" stroke="#7a7a7a" stroke-width="1.8"/><path d="M874.3 75.8 L880.8 82.1" stroke="#5c5c5c" stroke-width="3.4" stroke-linecap="round"/><circle cx="866.5" cy="68" r="9.4" fill="url(#glens)" stroke="#d2d8e0" stroke-width="2.2"/><path d="M860.5 68 L866 63 V66 H873 V70 H866 V73 Z" fill="#fff"/><rect x="890.5" y="57.5" width="25" height="16.5" rx="1.5" fill="#fff" stroke="#9aa6b6"/><path d="M909.4 75.8 L915.9 82.1" stroke="#5c5c5c" stroke-width="3.4" stroke-linecap="round"/><circle cx="903.5" cy="70" r="6.9" fill="url(#glens)" stroke="#d2d8e0" stroke-width="2.2"/><path d="M943 75 L950 81.5" stroke="#5a5a5a" stroke-width="3.6" stroke-linecap="round"/><path d="M937.5 57 L949 68.5 L937.5 80 L926 68.5 Z" fill="url(#glens)" stroke="#c8d4e4" stroke-width="1"/><path d="M937.5 59 V78 M928 68.5 H947" stroke="#fff" stroke-width="1.6"/><path d="M934.5 62 L937.5 58.5 L940.5 62 Z M934.5 75 L937.5 78.5 L940.5 75 Z M931 65.5 L927.5 68.5 L931 71.5 Z M944 65.5 L947.5 68.5 L944 71.5 Z" fill="#fff"/><rect x="15" y="97" width="41" height="28.5" rx="5" fill="#f7f7f7" stroke="#7d7d7d" stroke-width="1.6"/><path transform="translate(30.5,104) scale(0.85)" d="M0 0 L0 14 L3.2 11 L6 17.5 L8.3 16.5 L5.6 10.2 L10 10.2 Z" fill="#ffffff" stroke="#777" stroke-width="1.18" stroke-linejoin="round"/><rect x="88.5" y="94.5" width="34" height="34" fill="url(#gpress)" stroke="#6e6e6e" style="shape-rendering:crispEdges"/><path d="M101 111.5 H110 M105.5 107 V116" stroke="#000" stroke-width="1.2" fill="none"/><circle cx="128.7" cy="99.7" r="1.9" fill="#e8141c"/><circle cx="136.2" cy="99.7" r="1.9" fill="#e8141c"/><circle cx="143.6" cy="99.7" r="1.9" fill="#e8141c"/><circle cx="151.1" cy="99.7" r="1.9" fill="#e8141c"/><circle cx="128.7" cy="107.2" r="1.9" fill="#e8141c"/><circle cx="136.2" cy="107.2" r="1.9" fill="#e8141c"/><circle cx="143.6" cy="107.2" r="1.9" fill="#e8141c"/><circle cx="151.1" cy="107.2" r="1.9" fill="#e8141c"/><circle cx="128.7" cy="114.7" r="1.9" fill="#e8141c"/><circle cx="136.2" cy="114.7" r="1.9" fill="#e8141c"/><circle cx="143.6" cy="114.7" r="1.9" fill="#e8141c"/><circle cx="151.1" cy="114.7" r="1.9" fill="#e8141c"/><circle cx="128.7" cy="122.2" r="1.9" fill="#e8141c"/><circle cx="136.2" cy="122.2" r="1.9" fill="#e8141c"/><circle cx="143.6" cy="122.2" r="1.9" fill="#e8141c"/><circle cx="151.1" cy="122.2" r="1.9" fill="#e8141c"/><path d="M170.7 110.1 L193 122.4" stroke="#3a3a3a" stroke-width="1.3"/><path d="M179.7 99.7 Q181 112 193 113.3" stroke="#3a3a3a" stroke-width="1.3" fill="none"/><circle cx="179.7" cy="99.7" r="1.9" fill="#e8141c"/><circle cx="193" cy="113.3" r="1.9" fill="#e8141c"/><circle cx="170.7" cy="110.1" r="1.9" fill="#e8141c"/><circle cx="193" cy="122.4" r="1.9" fill="#e8141c"/><path d="M205.9 111.7 L228.8 99.3" stroke="#3a3a3a" stroke-width="1.3"/><path d="M214.9 122.1 Q217 110 228.3 108.5" stroke="#3a3a3a" stroke-width="1.3" fill="none"/><circle cx="205.9" cy="111.7" r="1.8" fill="#e8141c"/><circle cx="211.5" cy="108.7" r="1.8" fill="#e8141c"/><circle cx="216.7" cy="105.8" r="1.8" fill="#e8141c"/><circle cx="222.6" cy="102.6" r="1.8" fill="#e8141c"/><circle cx="228.8" cy="99.3" r="1.8" fill="#e8141c"/><circle cx="214.9" cy="122.1" r="1.8" fill="#e8141c"/><circle cx="216" cy="117" r="1.8" fill="#e8141c"/><circle cx="218.8" cy="112.6" r="1.8" fill="#e8141c"/><circle cx="223" cy="109.8" r="1.8" fill="#e8141c"/><circle cx="228.3" cy="108.5" r="1.8" fill="#e8141c"/><path d="M250.5 108.5 Q254 104 258 108.5" stroke="#9fc8c4" stroke-width="1.1" fill="none"/><path d="M243.1 100.2 L253.4 112.4" stroke="#3a3a3a" stroke-width="1.3"/><path d="M253.4 112.4 Q257 109 262.7 108.3" stroke="#3a3a3a" stroke-width="1.3" fill="none"/><path d="M253.4 112.4 Q250 116 249.4 121.9" stroke="#3a3a3a" stroke-width="1.3" fill="none"/><circle cx="253.4" cy="112.4" r="2" fill="#e8141c"/><path d="M276.7 119.5 L284.2 105.1" stroke="#3a3a3a" stroke-width="1.3"/><circle cx="290.8" cy="109" r="7" fill="none" stroke="#3a3a3a" stroke-width="1.3"/><circle cx="284.4" cy="105.3" r="2" fill="#e8141c"/><path d="M310.4 111.6 L332.8 100.2" stroke="#3a3a3a" stroke-width="1.3"/><path d="M319.2 121.9 Q320 110 332.8 108.1" stroke="#3a3a3a" stroke-width="1.3" fill="none"/><circle cx="321.6" cy="105.9" r="2" fill="#e8141c"/><circle cx="332.8" cy="121.9" r="2" fill="#e8141c"/><circle cx="357" cy="111.1" r="10.5" fill="none" stroke="#3a3a3a" stroke-width="1.3"/><circle cx="357" cy="111.1" r="2" fill="#e8141c"/><circle cx="357" cy="100.6" r="2" fill="#e8141c"/><circle cx="357" cy="121.6" r="2" fill="#e8141c"/><circle cx="346.5" cy="111.1" r="2" fill="#e8141c"/><circle cx="367.5" cy="111.1" r="2" fill="#e8141c"/><path d="M387.4 111.4 L410.5 99.3" stroke="#3a3a3a" stroke-width="1.3"/><path d="M396.3 122.4 Q398 110 410.5 108.5" stroke="#3a3a3a" stroke-width="1.3" fill="none"/><circle cx="399.1" cy="105.3" r="2" fill="#e8141c"/><circle cx="400.6" cy="112.5" r="2" fill="#e8141c"/><rect x="421.7" y="101.6" width="24.3" height="18.5" fill="none" stroke="#333" stroke-width="1.8"/><path d="M423 119 L444.5 103" stroke="#9a9a9a" stroke-width="0.8"/><circle cx="434" cy="110.9" r="2" fill="#e8141c"/><path d="M465.5 111.4 L487.7 99.7" stroke="#3a3a3a" stroke-width="1.3"/><path d="M474.5 121.3 Q476 110 487.7 108.5" stroke="#3a3a3a" stroke-width="1.3" fill="none"/><path d="M466 106.5 L471 103.5 L470 106 Z" stroke="#111" stroke-width="1.6" fill="#111"/><path d="M478.5 119.5 L480 114.5 L481.5 118 Z" stroke="#111" stroke-width="1.6" fill="#111"/><circle cx="472.9" cy="107.5" r="2" fill="#e8141c"/><circle cx="477.2" cy="113.3" r="2" fill="#e8141c"/><path d="M507 107.5 L522.5 99.3" stroke="#555" stroke-width="1.1" fill="none" stroke-dasharray="2 1.5"/><path d="M498.5 107 L503.5 104 L502.5 106.5 Z" stroke="#111" stroke-width="1.6" fill="#111"/><path d="M499 111 L502 109.5" stroke="#111" stroke-width="1.8" fill="none"/><circle cx="507.3" cy="107.5" r="2" fill="#e8141c"/><circle cx="522.5" cy="99.3" r="1.4" fill="#111"/><text x="519.3" y="114" font-size="11" fill="#1a1a1a" textLength="6.4" lengthAdjust="spacingAndGlyphs">2</text><text x="498.5" y="124.2" font-size="11" fill="#1a1a1a" textLength="5" lengthAdjust="spacingAndGlyphs">1</text><path d="M540.2 108.4 L565.8 116" stroke="#3a3a3a" stroke-width="1.3"/><path d="M559.8 98 L553.4 123.6" stroke="#3a3a3a" stroke-width="1.3"/><circle cx="556.2" cy="113.2" r="2" fill="#e8141c"/><path d="M577.4 113 L588.2 116.2" stroke="#3a3a3a" stroke-width="1.3"/><path d="M598.2 102 L595.8 113.2" stroke="#3a3a3a" stroke-width="1.3"/><circle cx="594.2" cy="118" r="2" fill="#e8141c"/><text x="617" y="115.4" font-size="12" fill="#1a1a1a" textLength="26.4" lengthAdjust="spacingAndGlyphs">Auto</text><text x="659.8" y="105.3" font-size="12" fill="#1a1a1a" textLength="6.4" lengthAdjust="spacingAndGlyphs">y</text><path d="M668.7 98 V115.3 H685.3" stroke="#333" stroke-width="1.3" fill="none"/><text x="678.5" y="124" font-size="12" fill="#1a1a1a" textLength="6.8" lengthAdjust="spacingAndGlyphs">x</text><circle cx="682.4" cy="100.3" r="1.7" fill="#e8141c"/><text x="697" y="110.2" font-size="12" fill="#1a1a1a" textLength="4.6" lengthAdjust="spacingAndGlyphs">r</text><path d="M694.7 120.3 L712 102.7 Q720 109 720 120.3 Z" stroke="#333" stroke-width="1.3" fill="none"/><text x="708.5" y="117" font-size="12" fill="#1a1a1a" textLength="6.8" lengthAdjust="spacingAndGlyphs">a</text><circle cx="712" cy="102.7" r="1.9" fill="#e8141c"/><path d="M740.4 102 H757.3 M740.4 102 V119.7" stroke="#444" stroke-width="0.9" fill="none" stroke-dasharray="1 1"/><circle cx="740.4" cy="102" r="2.3" fill="#e8141c"/><circle cx="757.3" cy="102" r="1.4" fill="#111"/><circle cx="740.4" cy="119.7" r="1.4" fill="#111"/><text x="755" y="113.4" font-size="11" fill="#1a1a1a" textLength="6" lengthAdjust="spacingAndGlyphs">2</text><text x="744.3" y="122.2" font-size="11" fill="#1a1a1a" textLength="5" lengthAdjust="spacingAndGlyphs">1</text><path d="M774.7 119.7 H792.4 M792.4 102 V119.7" stroke="#444" stroke-width="0.9" fill="none" stroke-dasharray="1 1"/><circle cx="792.4" cy="119.7" r="2.3" fill="#e8141c"/><circle cx="792.4" cy="102" r="1.4" fill="#111"/><circle cx="774.7" cy="119.7" r="1.4" fill="#111"/><text x="783.8" y="107.8" font-size="11" fill="#1a1a1a" textLength="6" lengthAdjust="spacingAndGlyphs">2</text><text x="773" y="115.4" font-size="11" fill="#1a1a1a" textLength="5" lengthAdjust="spacingAndGlyphs">1</text><path d="M814 100.7 H838 V120.7 H823.5 V116 H814 Z" stroke="#f2b4b4" stroke-width="1" fill="none"/><circle cx="820" cy="107" r="4.5" fill="none" stroke="#f2b4b4" stroke-width="1"/><path d="M828 116 L834 110 V116 Z" stroke="#f2b4b4" stroke-width="1" fill="none"/><circle cx="826" cy="110.7" r="1.9" fill="#e64040"/><rect x="851.5" y="94.5" width="34" height="34" fill="url(#gpress)" stroke="#6e6e6e" style="shape-rendering:crispEdges"/><path d="M864 111.5 H873 M868.5 107 V116" stroke="#000" stroke-width="1.2" fill="none"/><path d="M890 110.2 H915.2 M902.6 98 V123" stroke="#111" stroke-width="1.6" fill="none"/><circle cx="902.6" cy="110.2" r="4" fill="#f7b8b8" fill-opacity="0.55" stroke="#f06a6a" stroke-width="1.2"/><path d="M899.1 110.2 H906.1 M902.6 106.7 V113.7" stroke="#e8141c" stroke-width="1"/><path d="M924.8 110.2 H950" stroke="#111" stroke-width="1.6" fill="none"/><circle cx="937.4" cy="110.2" r="4" fill="#f7b8b8" fill-opacity="0.55" stroke="#f06a6a" stroke-width="1.2"/><path d="M933.9 110.2 H940.9 M937.4 106.7 V113.7" stroke="#e8141c" stroke-width="1"/><path d="M972.6 98 V123" stroke="#111" stroke-width="1.6" fill="none"/><circle cx="972.6" cy="110.2" r="4" fill="#f7b8b8" fill-opacity="0.55" stroke="#f06a6a" stroke-width="1.2"/><path d="M969.1 110.2 H976.1 M972.6 106.7 V113.7" stroke="#e8141c" stroke-width="1"/><path d="M998 120.8 L1018 109.4" stroke="#333" stroke-width="1.5"/><path d="M999 98.5 L999.6 103.5" stroke="#7c7c7c" stroke-width="1.3" fill="none"/><path d="M1004 99 L1005.6 103.6" stroke="#7c7c7c" stroke-width="1.3" fill="none"/><path d="M1009.3 101.5 L1011.8 105.5" stroke="#7c7c7c" stroke-width="1.3" fill="none"/><path d="M1013.2 105 L1016.2 108.8" stroke="#7c7c7c" stroke-width="1.3" fill="none"/><path d="M1016.2 117.2 L1021 115.2" stroke="#7c7c7c" stroke-width="1.3" fill="none"/><path d="M1016.8 121.2 L1021.2 121.2" stroke="#7c7c7c" stroke-width="1.3" fill="none"/><circle cx="998" cy="120.8" r="3.8" fill="#f7b8b8" fill-opacity="0.55" stroke="#f06a6a" stroke-width="1.2"/><path d="M994.7 120.8 H1001.3 M998 117.5 V124.1" stroke="#e8141c" stroke-width="1"/><path transform="translate(1048,107.5) scale(0.72)" d="M0 0 L0 14 L3.2 11 L6 17.5 L8.3 16.5 L5.6 10.2 L10 10.2 Z" fill="#fff" stroke="#777" stroke-width="1.39" stroke-linejoin="round"/><circle cx="1046.6" cy="104.8" r="3.8" fill="#f7b8b8" fill-opacity="0.55" stroke="#f06a6a" stroke-width="1.2"/><path d="M1043.3 104.8 H1049.8999999999999 M1046.6 101.5 V108.1" stroke="#e8141c" stroke-width="1"/><ellipse cx="1077.6" cy="105.8" rx="2.6" ry="4.2" fill="none" stroke="#111" stroke-width="1.8"/><rect x="1080.1" y="104.8" width="14" height="2.6" fill="#111"/><rect x="1089.6" y="105.8" width="4.5" height="5" fill="#111"/><rect x="1091.3999999999999" y="107.39999999999999" width="1" height="3.4" fill="#f0f0f0"/><circle cx="1084.4" cy="118.8" r="3.8" fill="#f7b8b8" fill-opacity="0.55" stroke="#f06a6a" stroke-width="1.2"/><path d="M1081.1000000000001 118.8 H1087.7 M1084.4 115.5 V122.1" stroke="#e8141c" stroke-width="1"/><ellipse cx="1119.6" cy="110" rx="2.6" ry="4.2" fill="none" stroke="#111" stroke-width="1.8"/><rect x="1122.1" y="109" width="14" height="2.6" fill="#111"/><rect x="1131.6" y="110" width="4.5" height="5" fill="#111"/><rect x="1133.3999999999999" y="111.6" width="1" height="3.4" fill="#f0f0f0"/><rect x="16.5" y="137.5" width="25" height="25" fill="#fff" stroke="#5a5a5a" style="shape-rendering:crispEdges"/><rect x="16" y="137" width="26" height="4" fill="#000" style="shape-rendering:crispEdges"/><rect x="17" y="138" width="2" height="2" fill="#fff" style="shape-rendering:crispEdges"/><path d="M22.5 152 L29 146.5 V157 L22.5 160 Z" fill="#8c8c8c" stroke="#777" stroke-width="0.6"/><path d="M24.5 152 L29 148 V158.5 L24.5 160.5 Z" fill="#a8a8a8"/><path d="M26 151 L35.5 145.5 V155.5 L26 160.5 Z" fill="#f4d2d6" stroke="#d89aa2" stroke-width="0.6"/><path d="M29 156 L33 149" stroke="#e06070" stroke-width="0.7"/><rect x="51.5" y="137.5" width="25" height="25" fill="#fff" stroke="#5a5a5a" style="shape-rendering:crispEdges"/><rect x="51" y="137" width="26" height="4" fill="#000" style="shape-rendering:crispEdges"/><rect x="52" y="138" width="2" height="2" fill="#fff" style="shape-rendering:crispEdges"/><rect x="57.5" y="146.5" width="10" height="7" fill="#f0ebc4" stroke="#b8b090" stroke-width="0.8"/><circle cx="67.5" cy="152.5" r="4.2" fill="#eee5b0" fill-opacity="0.6" stroke="#b8ae88" stroke-width="0.9"/><rect x="86.5" y="137.5" width="25" height="25" fill="#fff" stroke="#5a5a5a" style="shape-rendering:crispEdges"/><rect x="86" y="137" width="26" height="4" fill="#000" style="shape-rendering:crispEdges"/><rect x="87" y="138" width="2" height="2" fill="#fff" style="shape-rendering:crispEdges"/><rect x="91.5" y="146.5" width="15" height="10" rx="2" fill="#f2f5fa" stroke="#dde3ec" stroke-width="1"/><rect x="128.5" y="137.5" width="25" height="25" fill="#fff" stroke="#5a5a5a" style="shape-rendering:crispEdges"/><rect x="128" y="137" width="26" height="4" fill="#000" style="shape-rendering:crispEdges"/><rect x="129" y="138" width="2" height="2" fill="#fff" style="shape-rendering:crispEdges"/><rect x="130" y="144.5" width="3.5" height="3" fill="#111"/><rect x="135.5" y="144.5" width="15" height="3" rx="0.3" fill="#fafafa" stroke="#7a7a7a" stroke-width="0.8"/><rect x="130" y="149.5" width="3.5" height="3" fill="#111"/><rect x="135.5" y="149.5" width="15" height="3" rx="0.3" fill="#fafafa" stroke="#7a7a7a" stroke-width="0.8"/><rect x="130" y="154.5" width="3.5" height="3" fill="#111"/><rect x="135.5" y="154.5" width="15" height="3" rx="0.3" fill="#fafafa" stroke="#7a7a7a" stroke-width="0.8"/><rect x="163.5" y="137.5" width="25" height="25" fill="#fff" stroke="#5a5a5a" style="shape-rendering:crispEdges"/><rect x="163" y="137" width="26" height="4" fill="#000" style="shape-rendering:crispEdges"/><rect x="164" y="138" width="2" height="2" fill="#fff" style="shape-rendering:crispEdges"/><ellipse cx="175.8" cy="146" rx="6.5" ry="1.8" fill="#7a7a7a"/><path d="M169.3 146 Q173.5 149 174.5 152 V158.5 L177 159 V152 Q178 149 182.3 146 Z" fill="#b8b8b8" stroke="#8a8a8a" stroke-width="0.6"/><rect x="198.5" y="137.5" width="25" height="25" fill="#fff" stroke="#5a5a5a" style="shape-rendering:crispEdges"/><rect x="198" y="137" width="26" height="4" fill="#000" style="shape-rendering:crispEdges"/><rect x="199" y="138" width="2" height="2" fill="#fff" style="shape-rendering:crispEdges"/><path d="M203 151.5 H219" stroke="#e8a0a0" stroke-width="0.6"/><path d="M205 145.5 L207 148 V155 L205 158 Z" fill="#e8e8e8" stroke="#8a8a8a" stroke-width="0.7"/><rect x="207" y="148.5" width="4" height="6" fill="#f2f2f2" stroke="#8a8a8a" stroke-width="0.7"/><rect x="211" y="148.5" width="6" height="6" fill="#5a5a5a"/><rect x="236.5" y="133.5" width="34" height="34" fill="url(#gpress)" stroke="#6e6e6e" style="shape-rendering:crispEdges"/><rect x="241.5" y="138.5" width="25" height="25" fill="#fff" stroke="#5a5a5a" style="shape-rendering:crispEdges"/><rect x="241" y="138" width="26" height="4" fill="#000" style="shape-rendering:crispEdges"/><rect x="242" y="139" width="2" height="2" fill="#fff" style="shape-rendering:crispEdges"/><rect x="244" y="146" width="9" height="1" fill="#c6c6c6"/><rect x="244" y="149" width="10" height="1" fill="#c6c6c6"/><rect x="244" y="152" width="9" height="1" fill="#c6c6c6"/><rect x="244" y="155" width="10" height="1" fill="#c6c6c6"/><rect x="242" y="158" width="24" height="0.8" fill="#999"/><rect x="248" y="160" width="16" height="1.2" fill="#9a9a9a"/><rect x="275.5" y="137.5" width="25" height="25" fill="#fff" stroke="#5a5a5a" style="shape-rendering:crispEdges"/><rect x="275" y="137" width="26" height="4" fill="#000" style="shape-rendering:crispEdges"/><rect x="276" y="138" width="2" height="2" fill="#fff" style="shape-rendering:crispEdges"/><rect x="282.5" y="145.5" width="11" height="14" rx="1" fill="#e8e6ee" stroke="#c0a070" stroke-width="1.3"/><rect x="285.5" y="144.5" width="5" height="2.5" rx="0.8" fill="#8c8c8c"/><rect x="2.5" y="184.5" width="39" height="39" fill="url(#gbtn)" stroke="#9c9c9c" style="shape-rendering:crispEdges"/><rect x="42.5" y="184.5" width="39" height="39" fill="url(#gbtn)" stroke="#9c9c9c" style="shape-rendering:crispEdges"/><rect x="2.5" y="224.5" width="39" height="39" fill="url(#gbtn)" stroke="#9c9c9c" style="shape-rendering:crispEdges"/><rect x="42.5" y="224.5" width="39" height="39" fill="url(#gbtn)" stroke="#9c9c9c" style="shape-rendering:crispEdges"/><rect x="2.5" y="264.5" width="39" height="39" fill="url(#gbtn)" stroke="#9c9c9c" style="shape-rendering:crispEdges"/><rect x="42.5" y="264.5" width="39" height="39" fill="url(#gbtn)" stroke="#9c9c9c" style="shape-rendering:crispEdges"/><rect x="2.5" y="304.5" width="39" height="39" fill="url(#gbtn)" stroke="#9c9c9c" style="shape-rendering:crispEdges"/><rect x="42.5" y="304.5" width="39" height="39" fill="url(#gbtn)" stroke="#9c9c9c" style="shape-rendering:crispEdges"/><rect x="2.5" y="344.5" width="39" height="39" fill="url(#gbtn)" stroke="#9c9c9c" style="shape-rendering:crispEdges"/><rect x="2.5" y="392.5" width="39" height="39" fill="url(#gbtn)" stroke="#9c9c9c" style="shape-rendering:crispEdges"/><rect x="42.5" y="392.5" width="39" height="39" fill="url(#gbtn)" stroke="#9c9c9c" style="shape-rendering:crispEdges"/><rect x="2.5" y="432.5" width="39" height="39" fill="url(#gbtn)" stroke="#9c9c9c" style="shape-rendering:crispEdges"/><rect x="2.5" y="480.5" width="39" height="39" fill="url(#gbtn)" stroke="#9c9c9c" style="shape-rendering:crispEdges"/><rect x="42.5" y="480.5" width="39" height="39" fill="url(#gbtn)" stroke="#9c9c9c" style="shape-rendering:crispEdges"/><rect x="2.5" y="520.5" width="39" height="39" fill="url(#gbtn)" stroke="#9c9c9c" style="shape-rendering:crispEdges"/><rect x="42.5" y="520.5" width="39" height="39" fill="url(#gbtn)" stroke="#9c9c9c" style="shape-rendering:crispEdges"/><rect x="2.5" y="568.5" width="39" height="39" fill="url(#gbtn)" stroke="#9c9c9c" style="shape-rendering:crispEdges"/><path d="M10.8 195.3 H18.4 M14.6 191.5 V199.10000000000002" stroke="#111" stroke-width="1.3" fill="none"/><path d="M26.5 205.5 H34.1 M30.3 201.7 V209.3" stroke="#111" stroke-width="1.3" fill="none"/><path d="M11.5 212.3 H19.1 M15.3 208.5 V216.10000000000002" stroke="#111" stroke-width="1.3" fill="none"/><path d="M37 219 H31.8 L37 213.8 Z" fill="#000"/><path d="M49.5 210.9 L75.7 198.2" stroke="#2c2c2c" stroke-width="1.3" fill="none"/><path d="M77 219 H71.8 L77 213.8 Z" fill="#000"/><path d="M10.2 255 A22.6 22.6 0 0 1 32.8 232.3" stroke="#2c2c2c" stroke-width="1.3" fill="none"/><path d="M37 259 H31.8 L37 253.8 Z" fill="#000"/><circle cx="61.1" cy="243.3" r="11.2" fill="none" stroke="#2c2c2c" stroke-width="1.3"/><path d="M77 259 H71.8 L77 253.8 Z" fill="#000"/><ellipse cx="21.8" cy="283.6" rx="15" ry="6.8" transform="rotate(-42 21.8 283.6)" fill="none" stroke="#2c2c2c" stroke-width="1.3"/><path d="M37 299 H31.8 L37 293.8 Z" fill="#000"/><path d="M50 275 Q49 270 53 273 Q58 277 64 284 Q70 291 73.5 286 Q76 280 72 274.5 Q68 271 64 280 Q60 291 56 292.5 Q52 293 50.5 284 Z" stroke="#2c2c2c" stroke-width="1.2" fill="none"/><path d="M77 299 H71.8 L77 293.8 Z" fill="#000"/><path d="M15.6 318 A5.3 5.3 0 0 0 15.6 328.7 H33" stroke="#2c2c2c" stroke-width="1.3" fill="none"/><path d="M37 339 H31.8 L37 333.8 Z" fill="#000"/><path d="M47.6 317.1 L51.5 310.3 H59.5 L63.4 317.1 L59.5 324 H51.5 Z" stroke="#111" stroke-width="1.2" fill="none"/><path d="M64.6 325.3 L70.6 315.6 L76.6 325.3 Z" stroke="#111" stroke-width="1.2" fill="none"/><rect x="48.6" y="329.3" width="15.8" height="7.8" fill="none" stroke="#111" stroke-width="1.3"/><path d="M77 339 H71.8 L77 333.8 Z" fill="#000"/><defs><clipPath id="hclip"><path d="M10.6 363.5 L16.6 356.5 H33.8 V372.1 H10.6 Z"/></clipPath></defs><g clip-path="url(#hclip)"><path d="M-2 374 L16 354 M1 374 L19 354 M4 374 L22 354 M7 374 L25 354 M10 374 L28 354 M13 374 L31 354 M16 374 L34 354 M19 374 L37 354 M22 374 L40 354 M25 374 L43 354 M28 374 L46 354 M31 374 L49 354 M34 374 L52 354 M37 374 L55 354 " stroke="#666" stroke-width="0.7"/></g><circle cx="24.7" cy="365" r="3.6" fill="#eee" stroke="#222" stroke-width="1.1"/><path d="M10.6 363.5 L16.6 356.5 H33.8 V372.1 H10.6 Z" stroke="#111" stroke-width="1.4" fill="none"/><path d="M37 379 H31.8 L37 373.8 Z" fill="#000"/><text x="22.2" y="423.3" font-family="Liberation Serif, serif" font-size="32" fill="#000" text-anchor="middle" style="font-family:'Liberation Serif', serif" textLength="22.5" lengthAdjust="spacingAndGlyphs">A</text><path d="M51.4 403 V421 M71.6 403 V421 M52 405.3 H71" stroke="#111" stroke-width="1.4" fill="none"/><path d="M52 405.3 L56 403 V407.6 Z M71 405.3 L67 403 V407.6 Z" fill="#111"/><path d="M77 427 H71.8 L77 421.8 Z" fill="#000"/><rect x="10" y="443" width="24.3" height="18.2" fill="#fff" stroke="#000" stroke-width="1.6"/><path d="M12.5 458.5 V455 L16 450.5 L19.5 453.5 L24 448.5 L31 455.5 V458.5 Z" fill="#000"/><circle cx="29.2" cy="447" r="1.8" fill="#000"/><path d="M7.6 492.6 V513.3 H28.2 Z" stroke="#222" stroke-width="1.4" fill="none"/><path d="M12.6 503.6 V508.8 H18 Z" stroke="#222" stroke-width="1.2" fill="none"/><path d="M12 488.5 L14 486.5 L24.5 496 L24.8 498.5 L22.5 498 Z" fill="#d42020"/><path d="M31.5 488 L28.5 505.5 M31.5 488 L34.5 505.5" stroke="#222" stroke-width="1.2" fill="none"/><circle cx="31.5" cy="489" r="1.5" fill="none" stroke="#222" stroke-width="1"/><path d="M31.5 485.5 V487" stroke="#222" stroke-width="1.2" fill="none"/><path d="M37 515 H31.8 L37 509.8 Z" fill="#000"/><rect x="48.8" y="495.5" width="26.5" height="8.5" rx="1.5" fill="#fbfbfb" stroke="#333" stroke-width="1.2"/><path d="M51.5 496 V500.0 M53.6 496 V498.8 M55.7 496 V500.0 M57.8 496 V498.8 M59.9 496 V500.0 M62.0 496 V498.8 M64.1 496 V500.0 M66.2 496 V498.8 M68.3 496 V500.0 M70.4 496 V498.8 M72.5 496 V500.0 " stroke="#444" stroke-width="0.8" fill="none"/><path d="M10.6 543 V529.9 H29.4 V543 H8.5" stroke="#555" stroke-width="1.1" fill="none"/><circle cx="26.7" cy="542.5" r="8.2" fill="none" stroke="#555" stroke-width="1.1"/><path d="M48.9 539 L69 527.4" stroke="#e03030" stroke-width="1.3" fill="none"/><path transform="translate(60.5,534) scale(0.95)" d="M0 0 L0 14 L3.2 11 L6 17.5 L8.3 16.5 L5.6 10.2 L10 10.2 Z" fill="#fff" stroke="#666" stroke-width="1.05" stroke-linejoin="round"/><path d="M77 555 H71.8 L77 549.8 Z" fill="#000"/><path d="M24.2 575.6 L33.8 581.2 V592.3 L19.7 600.3 L10.1 594.8 V583.7 Z M10.1 583.7 L19.7 589.2 L33.8 581.2 M19.7 589.2 V600.3" stroke="#111" stroke-width="1.3" fill="none" stroke-linejoin="round"/><path d="M37 603 H31.8 L37 597.8 Z" fill="#000"/></svg></body></html>
